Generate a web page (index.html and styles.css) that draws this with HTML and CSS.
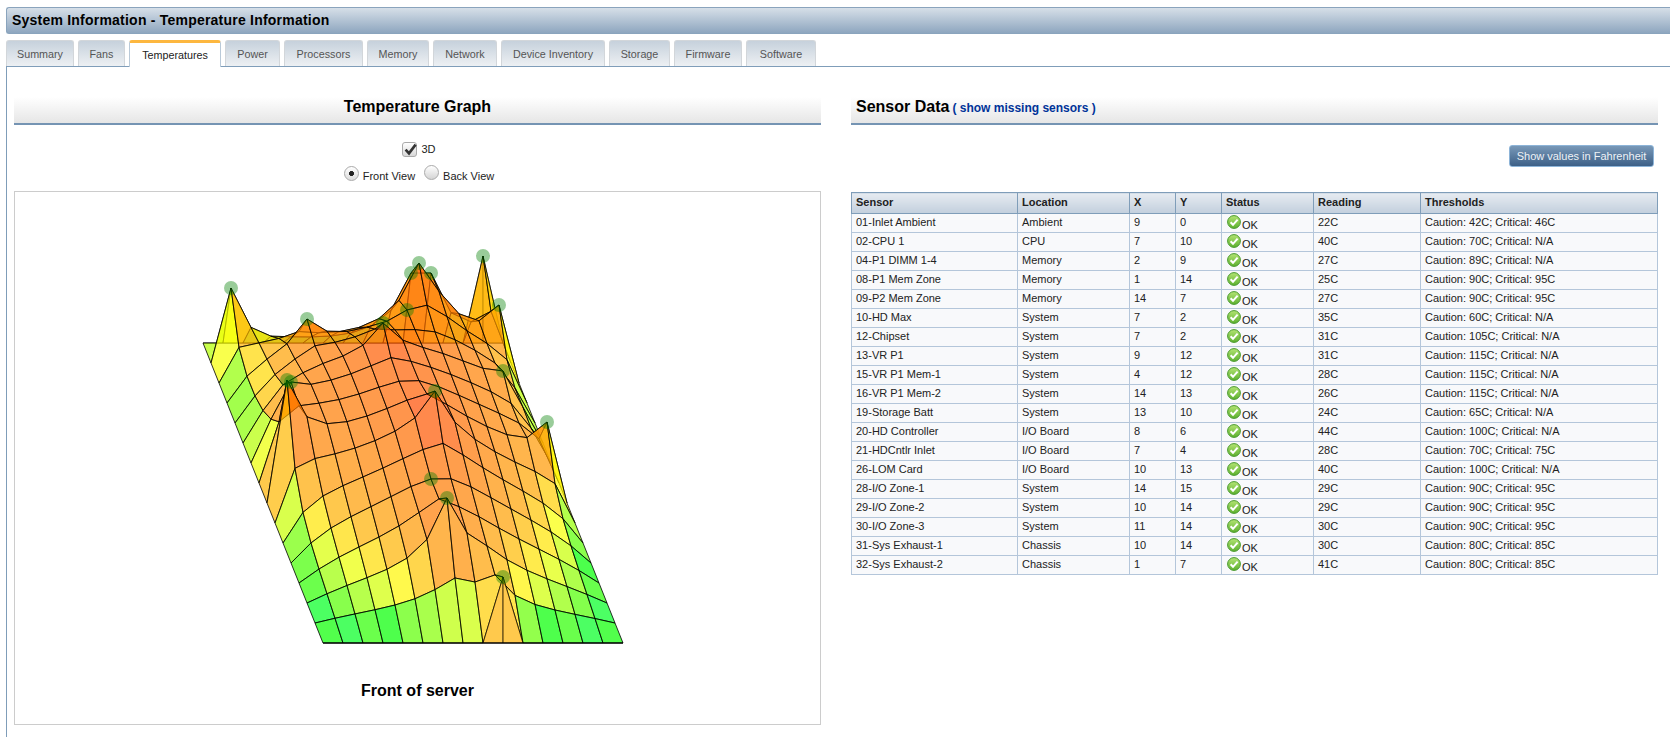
FILE: index.html
```html
<!DOCTYPE html>
<html>
<head>
    <title>System Information - Temperature Information</title>
    <link rel="stylesheet" href="styles.css">
</head>
<body>
    <svg class="icon-defs" width="0" height="0">
        <defs>
            <linearGradient id="okFill" x1="0" y1="0" x2="0" y2="1">
                <stop offset="0" stop-color="#b4e474"/>
                <stop offset="1" stop-color="#5cb02e"/>
            </linearGradient>
        </defs>
        <symbol id="okIcon" viewBox="0 0 14 14">
            <circle cx="7" cy="7" r="6.4" fill="url(#okFill)" stroke="#4a9a30" stroke-width="1"/>
            <path d="M3.6 7.2 L6 9.8 L10.6 4.6" fill="none" stroke="#fff" stroke-width="2"/>
        </symbol>
    </svg>

    <div class="page">
        <h1 class="title-bar">System Information - Temperature Information</h1>

        <ul class="tabs">
            <li class="tab">Summary</li>
            <li class="tab">Fans</li>
            <li class="tab tab-active">Temperatures</li>
            <li class="tab">Power</li>
            <li class="tab">Processors</li>
            <li class="tab">Memory</li>
            <li class="tab">Network</li>
            <li class="tab">Device Inventory</li>
            <li class="tab">Storage</li>
            <li class="tab">Firmware</li>
            <li class="tab">Software</li>
        </ul>

        <div class="content">
            <section class="panel">
                <div class="panel-header panel-header-center">
                    <h2>Temperature Graph</h2>
                </div>

                <div class="view-check">
                    <span class="check-box">
                        <svg width="14" height="14" viewBox="0 0 14 14"><path d="M2.6 6.6 L6 10.4 L12.6 1.6" fill="none" stroke="#333" stroke-width="2.6"/></svg>
                    </span>
                    <span>3D</span>
                </div>
                <div class="view-radios">
                    <span class="radio radio-on"></span>
                    <span class="radio-text">Front View</span>
                    <span class="radio radio-back"></span>
                    <span class="radio-text">Back View</span>
                </div>

                <div class="graph-box">
                    <svg id="graph" class="graph" viewBox="15 193 805 470"></svg>
                    <p class="graph-caption">Front of server</p>
                </div>
            </section>

            <section class="panel">
                <div class="panel-header">
                    <h2>Sensor Data</h2>
                    <a class="missing-link">( show missing sensors )</a>
                </div>

                <div class="button-row">
                    <button class="unit-button">Show values in Fahrenheit</button>
                </div>

                <table class="sensor-table">
                    <colgroup>
                        <col class="col-sensor">
                        <col class="col-location">
                        <col class="col-xy">
                        <col class="col-xy">
                        <col class="col-status">
                        <col class="col-reading">
                        <col>
                    </colgroup>
                    <thead>
                        <tr><th>Sensor</th><th>Location</th><th>X</th><th>Y</th><th>Status</th><th>Reading</th><th>Thresholds</th></tr>
                    </thead>
                    <tbody>
                        <tr><td>01-Inlet Ambient</td><td>Ambient</td><td>9</td><td>0</td><td><svg class="ok-icon"><use href="#okIcon"/></svg><span class="ok-text">OK</span></td><td>22C</td><td>Caution: 42C; Critical: 46C</td></tr>
                        <tr><td>02-CPU 1</td><td>CPU</td><td>7</td><td>10</td><td><svg class="ok-icon"><use href="#okIcon"/></svg><span class="ok-text">OK</span></td><td>40C</td><td>Caution: 70C; Critical: N/A</td></tr>
                        <tr><td>04-P1 DIMM 1-4</td><td>Memory</td><td>2</td><td>9</td><td><svg class="ok-icon"><use href="#okIcon"/></svg><span class="ok-text">OK</span></td><td>27C</td><td>Caution: 89C; Critical: N/A</td></tr>
                        <tr><td>08-P1 Mem Zone</td><td>Memory</td><td>1</td><td>14</td><td><svg class="ok-icon"><use href="#okIcon"/></svg><span class="ok-text">OK</span></td><td>25C</td><td>Caution: 90C; Critical: 95C</td></tr>
                        <tr><td>09-P2 Mem Zone</td><td>Memory</td><td>14</td><td>7</td><td><svg class="ok-icon"><use href="#okIcon"/></svg><span class="ok-text">OK</span></td><td>27C</td><td>Caution: 90C; Critical: 95C</td></tr>
                        <tr><td>10-HD Max</td><td>System</td><td>7</td><td>2</td><td><svg class="ok-icon"><use href="#okIcon"/></svg><span class="ok-text">OK</span></td><td>35C</td><td>Caution: 60C; Critical: N/A</td></tr>
                        <tr><td>12-Chipset</td><td>System</td><td>7</td><td>2</td><td><svg class="ok-icon"><use href="#okIcon"/></svg><span class="ok-text">OK</span></td><td>31C</td><td>Caution: 105C; Critical: N/A</td></tr>
                        <tr><td>13-VR P1</td><td>System</td><td>9</td><td>12</td><td><svg class="ok-icon"><use href="#okIcon"/></svg><span class="ok-text">OK</span></td><td>31C</td><td>Caution: 115C; Critical: N/A</td></tr>
                        <tr><td>15-VR P1 Mem-1</td><td>System</td><td>4</td><td>12</td><td><svg class="ok-icon"><use href="#okIcon"/></svg><span class="ok-text">OK</span></td><td>28C</td><td>Caution: 115C; Critical: N/A</td></tr>
                        <tr><td>16-VR P1 Mem-2</td><td>System</td><td>14</td><td>13</td><td><svg class="ok-icon"><use href="#okIcon"/></svg><span class="ok-text">OK</span></td><td>26C</td><td>Caution: 115C; Critical: N/A</td></tr>
                        <tr><td>19-Storage Batt</td><td>System</td><td>13</td><td>10</td><td><svg class="ok-icon"><use href="#okIcon"/></svg><span class="ok-text">OK</span></td><td>24C</td><td>Caution: 65C; Critical: N/A</td></tr>
                        <tr><td>20-HD Controller</td><td>I/O Board</td><td>8</td><td>6</td><td><svg class="ok-icon"><use href="#okIcon"/></svg><span class="ok-text">OK</span></td><td>44C</td><td>Caution: 100C; Critical: N/A</td></tr>
                        <tr><td>21-HDCntlr Inlet</td><td>I/O Board</td><td>7</td><td>4</td><td><svg class="ok-icon"><use href="#okIcon"/></svg><span class="ok-text">OK</span></td><td>28C</td><td>Caution: 70C; Critical: 75C</td></tr>
                        <tr><td>26-LOM Card</td><td>I/O Board</td><td>10</td><td>13</td><td><svg class="ok-icon"><use href="#okIcon"/></svg><span class="ok-text">OK</span></td><td>40C</td><td>Caution: 100C; Critical: N/A</td></tr>
                        <tr><td>28-I/O Zone-1</td><td>System</td><td>14</td><td>15</td><td><svg class="ok-icon"><use href="#okIcon"/></svg><span class="ok-text">OK</span></td><td>29C</td><td>Caution: 90C; Critical: 95C</td></tr>
                        <tr><td>29-I/O Zone-2</td><td>System</td><td>10</td><td>14</td><td><svg class="ok-icon"><use href="#okIcon"/></svg><span class="ok-text">OK</span></td><td>29C</td><td>Caution: 90C; Critical: 95C</td></tr>
                        <tr><td>30-I/O Zone-3</td><td>System</td><td>11</td><td>14</td><td><svg class="ok-icon"><use href="#okIcon"/></svg><span class="ok-text">OK</span></td><td>30C</td><td>Caution: 90C; Critical: 95C</td></tr>
                        <tr><td>31-Sys Exhaust-1</td><td>Chassis</td><td>10</td><td>14</td><td><svg class="ok-icon"><use href="#okIcon"/></svg><span class="ok-text">OK</span></td><td>30C</td><td>Caution: 80C; Critical: 85C</td></tr>
                        <tr><td>32-Sys Exhaust-2</td><td>Chassis</td><td>1</td><td>7</td><td><svg class="ok-icon"><use href="#okIcon"/></svg><span class="ok-text">OK</span></td><td>41C</td><td>Caution: 80C; Critical: 85C</td></tr>
                    </tbody>
                </table>
            </section>
        </div>
    </div>

    <script src="graph.js"></script>
</body>
</html>
```

FILE: styles.css
```css
body {
    margin: 0;
    background-color: #fff;
    font-family: "Liberation Sans", Arial, sans-serif;
    font-size: 11px;
    color: #222;
    overflow: hidden;
}

.icon-defs {
    position: absolute;
}

.page {
    padding: 7px 0 0 6px;
}

.title-bar {
    margin: 0;
    height: 27px;
    box-sizing: border-box;
    padding-left: 5px;
    line-height: 24px;
    font-size: 14px;
    font-weight: bold;
    letter-spacing: 0.22px;
    color: #000;
    background: linear-gradient(#d6dfe8, #8ea6bf);
    border: 1px solid #8aa4bd;
    border-right: none;
    border-radius: 3px 0 0 3px;
}

.tabs {
    display: flex;
    gap: 4px;
    list-style: none;
    margin: 6px 0 0;
    padding: 0;
    height: 26px;
}

.tab {
    box-sizing: border-box;
    width: 68px;
    height: 26px;
    text-align: center;
    line-height: 26px;
    font-size: 10.75px;
    color: #555;
    background: linear-gradient(#c6d1dc, #edf0f3);
    border: 1px solid #d2d6da;
    border-bottom: none;
    border-radius: 3px 3px 0 0;
}

.tab:nth-child(2) { width: 47px; }
.tab:nth-child(3) { width: 92px; }
.tab:nth-child(4) { width: 55px; }
.tab:nth-child(5) { width: 79px; }
.tab:nth-child(6) { width: 62px; }
.tab:nth-child(7) { width: 64px; }
.tab:nth-child(8) { width: 104px; }
.tab:nth-child(9) { width: 61px; }
.tab:nth-child(10) { width: 68px; }
.tab:nth-child(11) { width: 70px; }

.tab-active {
    position: relative;
    height: 27px;
    line-height: 25px;
    color: #222;
    background: #fff;
    border: 1px solid #b9c9d8;
    border-top: 3px solid #fdb73f;
    border-bottom: none;
    z-index: 1;
}

.content {
    display: grid;
    grid-template-columns: 807px 807px;
    column-gap: 30px;
    height: 671px;
    box-sizing: border-box;
    padding: 30px 0 0 7px;
    border-top: 1px solid #7f9db9;
    border-left: 1px solid #7f9db9;
}

.panel-header {
    display: flex;
    align-items: center;
    height: 28px;
    box-sizing: border-box;
    padding: 0 0 7px 5px;
    background: linear-gradient(#fff, #e6e6e6);
    border-bottom: 2px solid #7594b3;
}

.panel-header h2 {
    margin: 0;
    font-size: 16px;
    font-weight: bold;
    color: #000;
}

.panel-header-center {
    justify-content: center;
    padding-left: 0;
}

.missing-link {
    margin: 2px 0 0 3px;
    font-size: 12px;
    font-weight: bold;
    color: #003399;
}

.view-check {
    display: flex;
    justify-content: center;
    align-items: center;
    gap: 4px;
    height: 16px;
    margin-top: 16px;
    padding-left: 3px;
}

.check-box {
    display: block;
    box-sizing: border-box;
    width: 15px;
    height: 15px;
    background: linear-gradient(#fff, #d8d8d8);
    border: 1px solid #aaa;
    border-radius: 3px;
}

.check-box svg {
    display: block;
}

.view-radios {
    display: flex;
    justify-content: center;
    align-items: flex-end;
    height: 17px;
    margin-top: 8px;
    padding-left: 3px;
}

.radio {
    box-sizing: border-box;
    width: 15px;
    height: 15px;
    margin-bottom: 1px;
    background: linear-gradient(#fff, #d4d4d4);
    border: 1px solid #aaa;
    border-radius: 50%;
}

.radio-on {
    background: radial-gradient(circle, #222 0 2.2px, transparent 2.8px), linear-gradient(#fff, #dcdcdc);
}

.radio-back {
    margin-left: 9px;
    margin-bottom: 2px;
}

.radio-text {
    margin-left: 4px;
    line-height: 11px;
}

.graph-box {
    height: 534px;
    box-sizing: border-box;
    margin-top: 9px;
    border: 1px solid #ccc;
}

.graph {
    display: block;
    width: 805px;
    height: 470px;
}

.graph-caption {
    margin: 20px 0 0;
    text-align: center;
    font-size: 16px;
    font-weight: bold;
    color: #000;
}

.button-row {
    display: flex;
    justify-content: flex-end;
    margin-top: 20px;
    padding-right: 4px;
}

.unit-button {
    width: 145px;
    height: 22px;
    padding: 0;
    font-family: inherit;
    font-size: 11px;
    color: #eef2f6;
    background: linear-gradient(#7898b8, #3d6087);
    border: 1px solid #8db4d8;
    border-radius: 3px;
}

.sensor-table {
    width: 807px;
    margin-top: 25px;
    table-layout: fixed;
    border-collapse: collapse;
    border: 1px solid #7f9db9;
}

.col-sensor {
    width: 166px;
}

.col-location {
    width: 112px;
}

.col-xy {
    width: 46px;
}

.col-status {
    width: 92px;
}

.col-reading {
    width: 107px;
}

.sensor-table th {
    height: 21px;
    padding: 0 4px 2px;
    box-sizing: border-box;
    text-align: left;
    font-weight: bold;
    color: #222;
    background: linear-gradient(#e6ebf1, #c2cfdd);
    border: 1px solid #7f9db9;
}

.sensor-table td {
    height: 19px;
    padding: 0 4px 3px;
    box-sizing: border-box;
    background-color: #f8f9fb;
    border: 1px solid #b4c6da;
    white-space: nowrap;
}

.ok-icon {
    display: inline-block;
    width: 14px;
    height: 14px;
    margin-left: 1px;
    vertical-align: -2px;
}

.ok-text {
    position: relative;
    top: 2px;
    margin-left: 1px;
}
```

FILE: graph.js
```js
// surface plot of the sensor readings, 16 x 16 grid
var sensors = [
    [9, 0, 22], [7, 10, 40], [2, 9, 27], [1, 14, 25], [14, 7, 27],
    [7, 2, 35], [9, 12, 31], [4, 12, 28], [14, 13, 26], [13, 10, 24],
    [8, 6, 44], [7, 4, 28], [10, 13, 40], [14, 15, 29], [10, 14, 30],
    [11, 14, 30], [1, 7, 41]
];
var SIZE = 16;
var PX_PER_DEG = 3;
var LIFT = 0.7;
var NS = 'http://www.w3.org/2000/svg';
var svg = document.getElementById('graph');

// heights between sensors are relaxed from the neighbours, edges stay at 0
var h = [];
var fixed = [];
for (var y = 0; y < SIZE; y++) {
    h.push(new Array(SIZE).fill(0));
    fixed.push(new Array(SIZE).fill(false));
}
sensors.forEach(function (s) {
    h[s[1]][s[0]] = s[2] * PX_PER_DEG;
    fixed[s[1]][s[0]] = true;
});
for (var n = 0; n < 600; n++) {
    for (var j = 1; j < SIZE - 1; j++) {
        for (var i = 1; i < SIZE - 1; i++) {
            if (!fixed[j][i]) {
                h[j][i] = (h[j][i - 1] + h[j][i + 1] + h[j - 1][i] + h[j + 1][i] + LIFT) / 4;
            }
        }
    }
}

function surface(i, j) {
    return (323 + 20 * i - 8 * j) + ',' + (644 - 20 * j - h[j][i]);
}

function ground(i, j) {
    return (323 + 20 * i - 8 * j) + ',' + (644 - 20 * j);
}

function hue(height) {
    var stops = [[0, 120], [8, 105], [20, 75], [32, 55], [48, 40], [70, 32], [100, 24], [125, 12], [140, 0]];
    for (var k = 1; k < stops.length; k++) {
        if (height <= stops[k][0]) {
            var t = (height - stops[k - 1][0]) / (stops[k][0] - stops[k - 1][0]);
            return stops[k - 1][1] + t * (stops[k][1] - stops[k - 1][1]);
        }
    }
    return 0;
}

function addPolygon(points, hueValue, strokeAlpha) {
    var poly = document.createElementNS(NS, 'polygon');
    poly.setAttribute('points', points.join(' '));
    poly.setAttribute('fill', 'hsla(' + hueValue + ',100%,50%,0.7)');
    poly.setAttribute('stroke', 'rgba(0,0,0,' + strokeAlpha + ')');
    svg.appendChild(poly);
}

// spikes on the back and front edges hang a flat skirt down to the ground
function addSkirt(row) {
    for (var col = 0; col < SIZE - 1; col++) {
        if (h[row][col] > 0 || h[row][col + 1] > 0) {
            addPolygon([ground(col, row), ground(col + 1, row), surface(col + 1, row), surface(col, row)], 42, 0.6);
        }
    }
}

function addEdgeLine(row, alpha) {
    addPolygon([ground(0, row), ground(SIZE - 1, row)], 42, alpha);
}

addEdgeLine(SIZE - 1, 0.45);
addSkirt(SIZE - 1);

// back rows first so the front ones paint over them
for (var row = SIZE - 2; row >= 0; row--) {
    for (var col = 0; col < SIZE - 1; col++) {
        var avg = (h[row][col] + h[row][col + 1] + h[row + 1][col] + h[row + 1][col + 1]) / 4;
        var tone = hue(avg);
        if (avg < 8 && (row + col) % 2 === 1) {
            tone += 14;
        }
        addPolygon([surface(col, row), surface(col + 1, row), surface(col + 1, row + 1), surface(col, row + 1)], tone, 0.8);
    }
}

addSkirt(0);
addEdgeLine(0, 0.8);

sensors.forEach(function (s) {
    var dot = document.createElementNS(NS, 'circle');
    dot.setAttribute('cx', 323 + 20 * s[0] - 8 * s[1]);
    dot.setAttribute('cy', 644 - 20 * s[1] - h[s[1]][s[0]]);
    dot.setAttribute('r', 7);
    dot.setAttribute('fill', 'rgba(0,128,0,0.4)');
    svg.appendChild(dot);
});
```
